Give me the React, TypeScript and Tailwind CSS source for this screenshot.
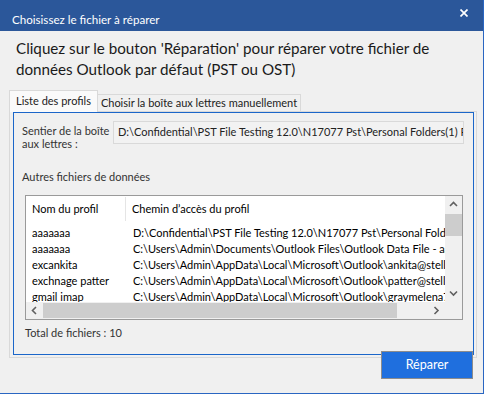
const rows = [
  { name: 'aaaaaaa', path: 'D:\\Confidential\\PST File Testing 12.0\\N17077 Pst\\Personal Folders(1) Recovered.pst' },
  { name: 'aaaaaaa', path: 'C:\\Users\\Admin\\Documents\\Outlook Files\\Outlook Data File - aaaaaaa.pst' },
  { name: 'excankita', path: 'C:\\Users\\Admin\\AppData\\Local\\Microsoft\\Outlook\\ankita@stellarinfo.com.ost' },
  { name: 'exchnage patter', path: 'C:\\Users\\Admin\\AppData\\Local\\Microsoft\\Outlook\\patter@stellarinfo.com.ost' },
  { name: 'gmail imap', path: 'C:\\Users\\Admin\\AppData\\Local\\Microsoft\\Outlook\\graymelena73@gmail.com.ost' },
]

function Chevron({ dir }: { dir: 'up' | 'down' | 'left' | 'right' }) {
  const d = {
    up: 'M1 5 L4.5 1.5 L8 5',
    down: 'M1 1.5 L4.5 5 L8 1.5',
    left: 'M5 1 L1.5 4.5 L5 8',
    right: 'M1.5 1 L5 4.5 L1.5 8',
  }[dir]
  const horiz = dir === 'up' || dir === 'down'
  return (
    <svg width={horiz ? 9 : 7} height={horiz ? 7 : 9} viewBox={horiz ? '0 0 9 7' : '0 0 7 9'} fill="none" stroke="#606060" strokeWidth="1.6">
      <path d={d} />
    </svg>
  )
}

export default function App() {
  return (
    <div
      className="w-[484px] h-[394px] bg-[#f0f0f0] border-r border-b border-[#2a66c2] flex flex-col text-[11px] text-[#222]"
      style={{ fontFamily: 'Lato, "Noto Sans", sans-serif' }}
    >
      {/* title bar */}
      <div className="h-[31px] shrink-0 bg-[#2b579a] flex items-center justify-between pl-3 pr-[15px] pt-[9px] text-white">
        <span className="text-[11.6px]">Choisissez le fichier à réparer</span>
        <svg width="8" height="8" viewBox="0 0 8 8" stroke="white" strokeWidth="1.7" className="-mt-[14px]">
          <path d="M0.5 0.5 L7.5 7.5 M7.5 0.5 L0.5 7.5" />
        </svg>
      </div>

      <h1 className="px-4 pt-[7px] text-[15.2px] leading-[21px] text-[#1a1a1a]">
        Cliquez sur le bouton 'Réparation' pour réparer votre fichier de données Outlook par défaut (PST ou OST)
      </h1>

      {/* tabs */}
      <div className="ml-[9px] mt-[10px] flex items-end h-[22px] shrink-0 relative z-10">
        <div className="h-[22px] w-[89px] shrink-0 bg-[#fafafa] border border-b-0 border-[#d9d9d9] flex items-center justify-center">
          Liste des profils
        </div>
        <div className="h-[17px] w-[203px] shrink-0 mb-px border border-l-0 border-b-0 border-[#d9d9d9] flex items-center justify-center bg-[#f0f0f0]">
          Choisir la boîte aux lettres manuellement
        </div>
      </div>

      {/* panel */}
      <div className="-mt-px ml-[9px] w-[468px] h-[247px] shrink-0 border border-[#d9d9d9] pl-[3px] pr-[2px] pb-[2px] flex">
        <div className="flex-1 border border-[#1b66c9] flex flex-col">
          <div className="mt-[8px] flex items-start">
            <div className="w-[99px] shrink-0 pl-2 pt-[3px] leading-[13px] text-[#333]">
              Sentier de la boîte
              <br />
              aux lettres :
            </div>
            <div className="w-[351px] h-[23px] shrink-0 border border-[#d9d9d9] bg-[#f2f2f2] pl-[4px] flex items-center overflow-hidden whitespace-nowrap">
              D:\Confidential\PST File Testing 12.0\N17077 Pst\Personal Folders(1) Recovered.pst
            </div>
          </div>

          <div className="mt-[19px] pl-2 leading-[16px] text-[#333]">Autres fichiers de données</div>

          {/* list view */}
          <div className="mt-[10px] ml-[11px] w-[438px] h-[125px] shrink-0 border border-[#9a9a9a] bg-white flex flex-col">
            <div className="flex h-[106px] shrink-0">
              <div className="w-[419px] shrink-0 overflow-hidden whitespace-nowrap text-black">
                <div className="flex h-[29px] items-center pb-[3px]">
                  <div className="w-[100px] shrink-0 pl-[6px] border-r border-[#e5e5e5] h-[24px] flex items-center">Nom du profil</div>
                  <div className="pl-[6px]">Chemin d’accès du profil</div>
                </div>
                {rows.map((r, i) => (
                  <div key={i} className="flex h-[16px] items-center">
                    <div className="w-[100px] shrink-0 pl-[6px]">{r.name}</div>
                    <div className="pl-[7px]">{r.path}</div>
                  </div>
                ))}
              </div>
              <div className="w-[17px] shrink-0 bg-[#f0f0f0] flex flex-col">
                <div className="h-[17px] flex items-center justify-center"><Chevron dir="up" /></div>
                <div className="flex-1">
                  <div className="mt-px h-[22px] bg-[#cdcdcd]" />
                </div>
                <div className="h-[17px] flex items-center justify-center"><Chevron dir="down" /></div>
              </div>
            </div>
            <div className="flex h-[17px] shrink-0">
              <div className="w-[419px] shrink-0 bg-[#f0f0f0] flex items-center">
                <div className="w-[17px] h-[17px] flex items-center justify-center"><Chevron dir="left" /></div>
                <div className="w-[354px] h-[15px] bg-[#cdcdcd]" />
                <div className="flex-1" />
                <div className="w-[17px] h-[17px] flex items-center justify-center"><Chevron dir="right" /></div>
              </div>
              <div className="w-[17px] bg-[#f0f0f0]" />
            </div>
          </div>

          <div className="mt-[5px] ml-[11px] leading-[16px] text-[#333]">Total de fichiers : 10</div>
        </div>
      </div>

      {/* footer */}
      <div className="-mt-[7px] ml-[381px] relative z-10">
        <button className="w-[92px] h-[28px] bg-[#1f6fde] border border-[#8c8c8c] text-white text-[12.5px]">
          Réparer
        </button>
      </div>
    </div>
  )
}
